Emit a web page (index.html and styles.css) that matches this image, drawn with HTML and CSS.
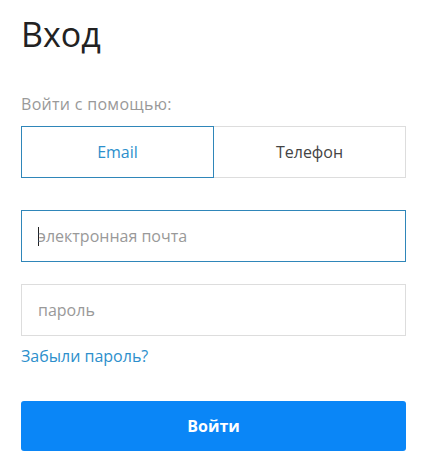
FILE: index.html
```html
<!DOCTYPE html>
<html lang="ru">
<head>
<meta charset="utf-8">
<link rel="stylesheet" href="styles.css">
</head>
<body>
<main class="login">
  <h1 class="title">Вход</h1>
  <p class="hint">Войти с помощью:</p>
  <div class="tabs">
    <button class="tab tab-active">Email</button>
    <button class="tab">Телефон</button>
  </div>
  <div class="field field-focus"><span class="caret"></span><span class="ph">электронная почта</span></div>
  <div class="field"><span class="ph">пароль</span></div>
  <a class="forgot" href="#">Забыли пароль?</a>
  <button class="submit">Войти</button>
</main>
</body>
</html>
```
FILE: styles.css
```css
* { box-sizing: border-box; }
html, body { margin: 0; padding: 0; background: #fff; }
body { font-family: "Open Sans", "Noto Sans", sans-serif; color: #333; }
.login { width: 385px; margin-left: 21px; display: flex; flex-direction: column; }
.title { margin: 14px 0 0; font-size: 34px; font-weight: 400; line-height: 40px; color: #222; }
.hint { margin: 40px 0 0; font-size: 16px; line-height: 20px; color: #999; letter-spacing: 0.3px; }
.tabs { margin-top: 12px; display: flex; height: 52px; }
.tab { flex: 1; font: inherit; font-size: 16px; background: #fff; border: 1px solid #ddd; color: #444; padding: 0; }
.tab-active { border-color: #2f86b9; color: #2d8fcc; }
.tab + .tab { border-left: none; }
.field { height: 52px; border: 1px solid #ddd; display: flex; align-items: center; padding-left: 16px; font-size: 16px; color: #999; margin-top: 22px; }
.field-focus { border-color: #2f86b9; margin-top: 32px; }
.caret { width: 1px; height: 19px; background: #222; margin-right: -1px; }
.forgot { margin-top: 9px; font-size: 16px; line-height: 22px; color: #2d8fcc; text-decoration: none; align-self: flex-start; }
.submit { margin-top: 34px; height: 50px; border: none; border-radius: 3px; background: #0a86f7; color: #fff; font: inherit; font-size: 16px; font-weight: 700; }
```
